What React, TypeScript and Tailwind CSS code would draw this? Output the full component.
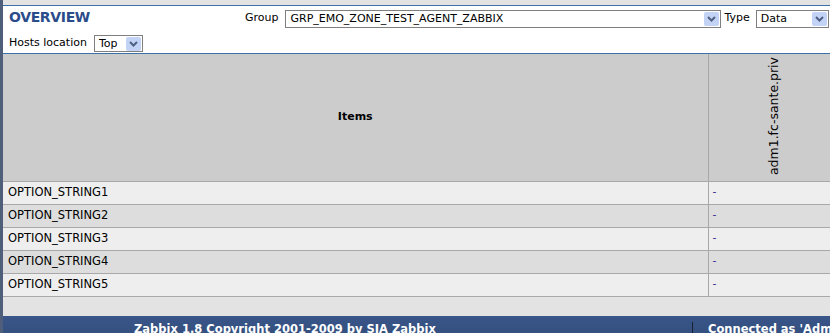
import React from "react";

const font = "font-['Tahoma','DejaVu_Sans','Liberation_Sans',sans-serif]";

type SelectBoxProps = {
  value: string;
  className?: string;
};

const SelectBox = ({ value, className = "" }: SelectBoxProps) => {
  return (
    <div
      className={
        "flex items-center justify-between border border-[#7f7f7f] bg-white pl-[4px] pr-[1px] " +
        className
      }
    >
      <span className="text-[11px] leading-none text-black">{value}</span>
      <span className="flex h-[14px] w-[15px] items-center justify-center rounded-[2px] bg-[#c3d3f5]">
        <svg width="9" height="6" viewBox="0 0 9 6">
          <path d="M1 1 L4.5 4.5 L8 1" stroke="#4d6185" strokeWidth="2" fill="none" />
        </svg>
      </span>
    </div>
  );
};

const rows = ["OPTION_STRING1", "OPTION_STRING2", "OPTION_STRING3", "OPTION_STRING4", "OPTION_STRING5"];

export default function App() {
  return (
    <div className={"flex h-[333px] w-[830px] overflow-hidden bg-[#e3e3e3] " + font}>
      <div className="w-[3px] shrink-0 bg-[#4f5e7a]" />
      <div className="flex min-w-0 flex-1 flex-col">
        <div className="h-[5px] shrink-0 bg-[#e3e3e3]" />
        {/* header */}
        <div className="h-[49px] shrink-0 border-y border-[#3a72a8] bg-white pl-[6px]">
          <div className="flex h-[25px] items-center">
            <span className="mt-[-2px] text-[14px] font-bold tracking-tight text-[#2b4c8b]">OVERVIEW</span>
            <span className="ml-[155px] text-[11px] text-black">Group</span>
            <SelectBox value="GRP_EMO_ZONE_TEST_AGENT_ZABBIX" className="ml-[7px] h-[18px] w-[436px]" />
            <span className="ml-[3px] text-[11px] text-black">Type</span>
            <SelectBox value="Data" className="ml-[6px] h-[18px] w-[73px]" />
          </div>
          <div className="flex items-center pt-[4px]">
            <span className="text-[11px] text-black">Hosts location</span>
            <SelectBox value="Top" className="ml-[7px] h-[17px] w-[49px]" />
          </div>
        </div>
        {/* table */}
        <table className="w-full shrink-0 border-collapse text-[11px] text-black">
          <thead>
            <tr className="h-[127px] bg-[#cccccc]">
              <th className="w-[705px] border-r border-b border-[#a8a8a8] text-center text-[11px] font-bold">Items</th>
              <th className="border-b border-[#a8a8a8] pb-[5px] align-bottom">
                <div className="flex justify-center pl-[10px]">
                  <span className="rotate-180 text-[12.5px] font-normal [writing-mode:vertical-rl]">adm1.fc-sante.priv</span>
                </div>
              </th>
            </tr>
          </thead>
          <tbody>
            {rows.map((name, i) => (
              <tr key={name} className={"h-[23px] " + (i % 2 === 0 ? "bg-[#eeeeee]" : "bg-[#dddddd]")}>
                <td className="border-r border-b border-[#a8a8a8] pl-[5px] text-[11.5px]">{name}</td>
                <td className="border-b border-[#a8a8a8] pl-[4px] text-[#3b2a90]">-</td>
              </tr>
            ))}
          </tbody>
        </table>
        <div className="flex-1 bg-[#e3e3e3]" />
        {/* footer */}
        <div className="flex h-[17px] shrink-0 whitespace-nowrap bg-gradient-to-b from-[#3a568a] to-[#33507f] pt-[6px] text-[11.5px] font-bold leading-[14px] text-white">
          <div className="w-[689px] shrink-0 pl-[131px]">Zabbix 1.8 Copyright 2001-2009 by SIA Zabbix</div>
          <div className="shrink-0 border-l border-[#1a2030] pl-[15px]">Connected as 'Admin'</div>
        </div>
      </div>
    </div>
  );
}
